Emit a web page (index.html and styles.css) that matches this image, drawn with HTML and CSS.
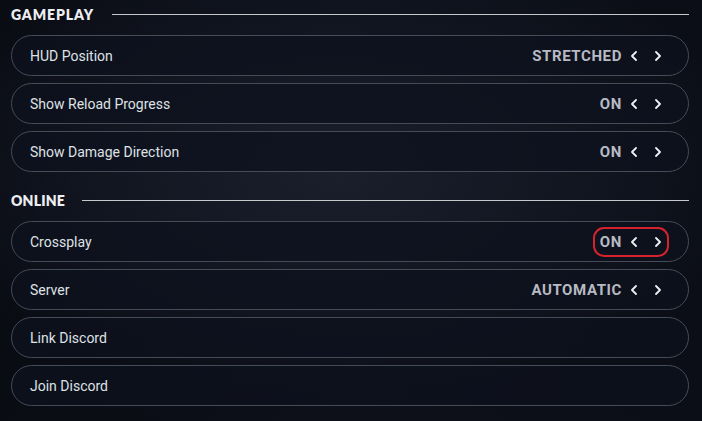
FILE: index.html
```html
<!DOCTYPE html>
<html>
<head>
<meta charset="utf-8">
<link rel="stylesheet" href="styles.css">
</head>
<body>
<main class="settings">
  <section class="section">
    <h2 class="section-title"><span>GAMEPLAY</span><i class="rule"></i></h2>
    <div class="rows">
      <div class="row"><span class="label">HUD Position</span>
        <span class="control"><span class="value">STRETCHED</span>
          <svg class="chev" viewBox="0 0 8 10"><polyline points="6,1 2,5 6,9"/></svg>
          <svg class="chev" viewBox="0 0 8 10"><polyline points="2,1 6,5 2,9"/></svg></span></div>
      <div class="row"><span class="label">Show Reload Progress</span>
        <span class="control"><span class="value">ON</span>
          <svg class="chev" viewBox="0 0 8 10"><polyline points="6,1 2,5 6,9"/></svg>
          <svg class="chev" viewBox="0 0 8 10"><polyline points="2,1 6,5 2,9"/></svg></span></div>
      <div class="row"><span class="label">Show Damage Direction</span>
        <span class="control"><span class="value">ON</span>
          <svg class="chev" viewBox="0 0 8 10"><polyline points="6,1 2,5 6,9"/></svg>
          <svg class="chev" viewBox="0 0 8 10"><polyline points="2,1 6,5 2,9"/></svg></span></div>
    </div>
  </section>
  <section class="section online">
    <h2 class="section-title"><span>ONLINE</span><i class="rule"></i></h2>
    <div class="rows">
      <div class="row"><span class="label">Crossplay</span>
        <span class="control highlight"><span class="value">ON</span>
          <svg class="chev" viewBox="0 0 8 10"><polyline points="6,1 2,5 6,9"/></svg>
          <svg class="chev" viewBox="0 0 8 10"><polyline points="2,1 6,5 2,9"/></svg></span></div>
      <div class="row"><span class="label">Server</span>
        <span class="control"><span class="value">AUTOMATIC</span>
          <svg class="chev" viewBox="0 0 8 10"><polyline points="6,1 2,5 6,9"/></svg>
          <svg class="chev" viewBox="0 0 8 10"><polyline points="2,1 6,5 2,9"/></svg></span></div>
      <div class="row"><span class="label">Link Discord</span></div>
      <div class="row"><span class="label">Join Discord</span></div>
    </div>
  </section>
</main>
</body>
</html>
```

FILE: styles.css
```css
html, body {
  margin: 0;
  padding: 0;
  height: 100%;
}
body {
  background:
    radial-gradient(ellipse 60% 55% at 48% 40%, #1a1f2c 0%, #121621 55%, rgba(11,14,22,0) 100%),
    linear-gradient(90deg, #0a0c14 0%, #0d1019 50%, #0b0e16 100%);
  background-color: #0b0e16;
  font-family: Roboto, "Liberation Sans", sans-serif;
  color: #dcdee3;
  overflow: hidden;
}
.settings {
  padding: 0 13px 0 11px;
}
.section-title {
  margin: 0;
  height: 28px;
  display: flex;
  align-items: center;
  gap: 18px;
  font-family: Lato, "Noto Sans", sans-serif;
  font-weight: 800;
  font-size: 14px;
  letter-spacing: 0.9px;
  color: #eceef1;
}
.online .section-title {
  gap: 17px;
  letter-spacing: 0.2px;
}
.rule {
  flex: 1;
  height: 1px;
  background: #c6c8ce;
}
.rows {
  display: flex;
  flex-direction: column;
  gap: 7px;
  margin-top: 7px;
}
.online {
  margin-top: 14px;
}
.row {
  height: 41px;
  box-sizing: border-box;
  border: 1px solid #464b58;
  border-radius: 21px;
  background: rgba(13, 17, 29, 0.75);
  display: flex;
  align-items: center;
  justify-content: space-between;
  padding: 0 26px 0 18px;
}
.label {
  font-size: 14px;
  letter-spacing: 0;
  color: #dfe1e5;
}
.control {
  display: flex;
  align-items: center;
  height: 16px;
}
.value {
  font-family: Roboto, "Liberation Sans", sans-serif;
  font-weight: 700;
  font-size: 15px;
  letter-spacing: 0.6px;
  color: #b7bac3;
  margin-right: 8px;
}
.chev {
  width: 8px;
  height: 10px;
  fill: none;
  stroke: #eef0f3;
  stroke-width: 1.8;
  stroke-linecap: round;
  stroke-linejoin: round;
}
.chev + .chev {
  margin-left: 16px;
}
.highlight {
  outline: 2px solid #d6222e;
  outline-offset: 5px;
  border-radius: 4px;
}
```
